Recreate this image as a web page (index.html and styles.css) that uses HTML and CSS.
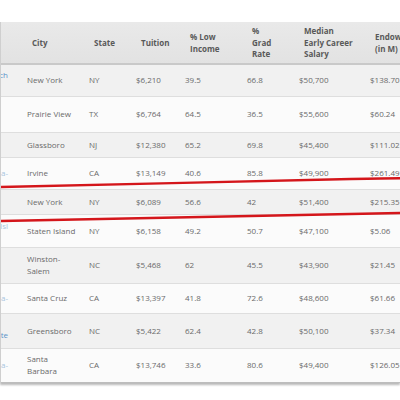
FILE: index.html
```html
<!DOCTYPE html>
<html>
<head>
<meta charset="utf-8">
<link rel="stylesheet" href="styles.css">
</head>
<body>
<div class="page">
  <div class="frame">
    <table class="grid">
      <colgroup>
        <col class="c-name"><col class="c-city"><col class="c-state"><col class="c-tui">
        <col class="c-low"><col class="c-grad"><col class="c-sal"><col class="c-end">
      </colgroup>
      <thead>
        <tr>
          <th class="name">School</th>
          <th>City</th>
          <th>State</th>
          <th>Tuition</th>
          <th>% Low<br>Income</th>
          <th>%<br>Grad<br>Rate</th>
          <th>Median<br>Early Career<br>Salary</th>
          <th>Endowment<br>(in M)</th>
        </tr>
      </thead>
      <tbody>
        <tr class="odd h32"><td class="name up">Baruch</td><td>New York</td><td>NY</td><td>$6,210</td><td>39.5</td><td>66.8</td><td>$50,700</td><td>$138.70</td></tr>
        <tr class="even h36"><td class="name"></td><td>Prairie View</td><td>TX</td><td>$6,764</td><td>64.5</td><td>36.5</td><td>$55,600</td><td>$60.24</td></tr>
        <tr class="odd h25"><td class="name"></td><td>Glassboro</td><td>NJ</td><td>$12,380</td><td>65.2</td><td>69.8</td><td>$45,400</td><td>$111.02</td></tr>
        <tr class="even h32"><td class="name faint">California-</td><td>Irvine</td><td>CA</td><td>$13,149</td><td>40.6</td><td>85.8</td><td>$49,900</td><td>$261.49</td></tr>
        <tr class="odd h25"><td class="name"></td><td>New York</td><td>NY</td><td>$6,089</td><td>56.6</td><td>42</td><td>$51,400</td><td>$215.35</td></tr>
        <tr class="even h33"><td class="name up faint">Staten Isl</td><td>Staten Island</td><td>NY</td><td>$6,158</td><td>49.2</td><td>50.7</td><td>$47,100</td><td>$5.06</td></tr>
        <tr class="odd h36"><td class="name"></td><td>Winston-<br>Salem</td><td>NC</td><td>$5,468</td><td>62</td><td>45.5</td><td>$43,900</td><td>$21.45</td></tr>
        <tr class="even h30"><td class="name faint">California-</td><td>Santa Cruz</td><td>CA</td><td>$13,397</td><td>41.8</td><td>72.6</td><td>$48,600</td><td>$61.66</td></tr>
        <tr class="odd h35"><td class="name down">A&amp;T State</td><td>Greensboro</td><td>NC</td><td>$5,422</td><td>62.4</td><td>42.8</td><td>$50,100</td><td>$37.34</td></tr>
        <tr class="even h34"><td class="name faint">California-</td><td>Santa<br>Barbara</td><td>CA</td><td>$13,746</td><td>33.6</td><td>80.6</td><td>$49,400</td><td>$126.05</td></tr>
      </tbody>
    </table>
    <svg class="marker" width="400" height="400" viewBox="0 0 400 400">
      <path d="M-2,187 C100,185 250,181 350,179 S394,179 402,186" />
      <path d="M-2,221 C100,220 250,217 402,213" />
    </svg>
  </div>
</div>
</body>
</html>
```

FILE: styles.css
```css
html, body {
  margin: 0;
  padding: 0;
  background: #ffffff;
}

body {
  font-family: "Open Sans", "Liberation Sans", sans-serif;
  font-size: 8px;
  color: #6a6a6a;
  width: 400px;
  height: 400px;
  overflow: hidden;
}

.page {
  padding-top: 22px;
}

.frame {
  position: relative;
  overflow: hidden;
  width: 400px;
  border-left: 1px solid #cfcfcf;
  box-sizing: border-box;
  box-shadow: 0 2px 2px rgba(0, 0, 0, 0.28);
}

.grid {
  border-collapse: collapse;
  table-layout: fixed;
  width: 523px;
  margin-left: -81px;
}

.c-name { width: 100px; }
.c-city { width: 62px; }
.c-state { width: 47px; }
.c-tui { width: 49px; }
.c-low { width: 62px; }
.c-grad { width: 52px; }
.c-sal { width: 71px; }
.c-end { width: 80px; }

thead tr {
  height: 42px;
  background: linear-gradient(#e9e9e9, #e2e2e2);
}

th {
  text-align: left;
  vertical-align: middle;
  font-weight: 700;
  color: #595959;
  line-height: 11.5px;
  padding: 0 0 0 12px;
  border-bottom: 2px solid #c9c9c9;
  white-space: nowrap;
}

th.name {
  color: transparent;
}

td {
  text-align: left;
  vertical-align: middle;
  line-height: 12px;
  padding: 0 0 0 7px;
  border-bottom: 1px solid #dedede;
  white-space: nowrap;
}

td.name {
  text-align: right;
  padding: 0 12px 0 0;
  color: #5a93c9;
}

td.name.up { padding-bottom: 10px; }
td.name.down { padding-top: 8px; }
td.name.faint { color: #a9c6e0; }

tr.odd { background: #f1f1f1; }
tr.even { background: #fbfbfb; }

tr.h25 { height: 25px; }
tr.h30 { height: 30px; }
tr.h32 { height: 32px; }
tr.h33 { height: 33px; }
tr.h34 { height: 34px; }
tr.h35 { height: 35px; }
tr.h36 { height: 36px; }

tbody tr:last-child td {
  border-bottom: 1px solid #bdbdbd;
}

.marker {
  position: absolute;
  left: 0;
  top: -22px;
  pointer-events: none;
}

.marker path {
  fill: none;
  stroke: #d4161b;
  stroke-width: 2.4;
  stroke-linecap: round;
}
```
